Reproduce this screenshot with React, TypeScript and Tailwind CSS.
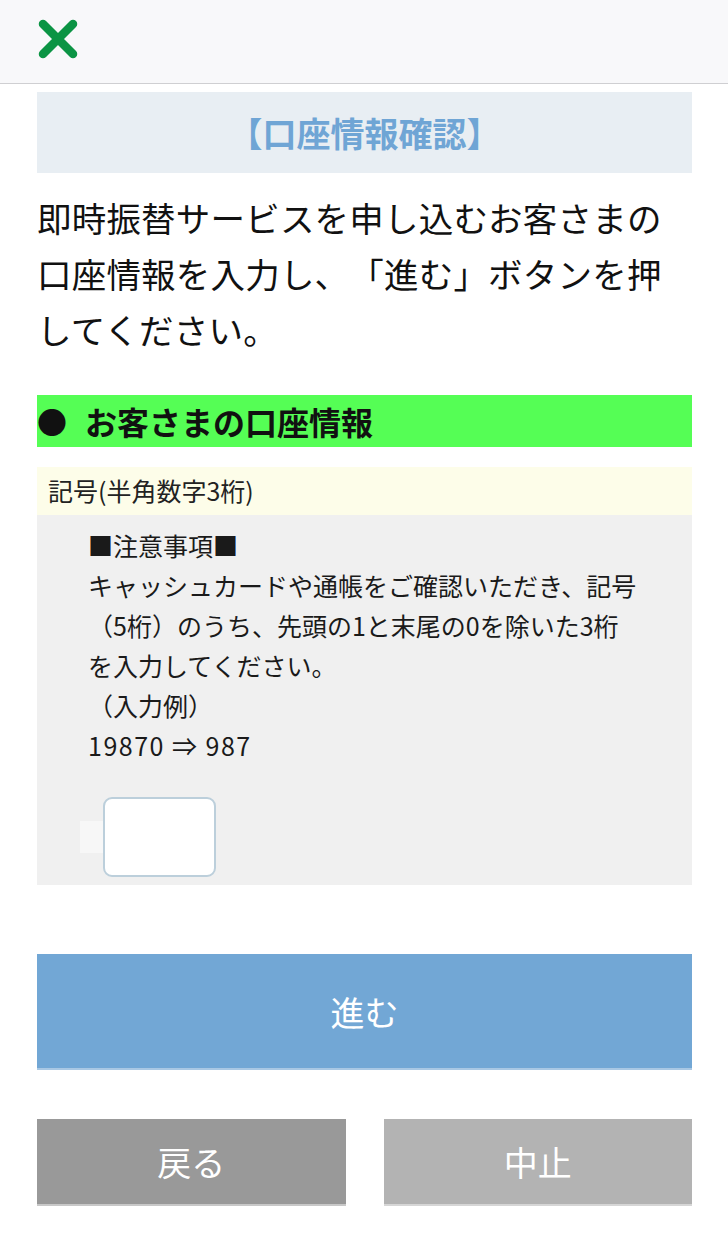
export default function App() {
  const jp = { fontFamily: '"Noto Sans CJK JP", "Noto Sans", sans-serif' };

  return (
    <div className="min-h-[1254px] bg-white text-[#111] [text-spacing-trim:space-all]" style={jp}>
      {/* top bar */}
      <header className="h-[84px] bg-[#f8f8fa] border-b border-[#cfcfd2] flex items-center pl-[38px]">
        <svg width="40" height="40" viewBox="0 0 40 40" className="-mt-[6px]">
          <path d="M5 5 L35 35 M35 5 L5 35" stroke="#0b9444" strokeWidth="8.5" strokeLinecap="round" />
        </svg>
      </header>

      <main className="pl-[37px] pr-[36px]">
        <div className="mt-[8px] h-[81px] bg-[#e8eef3] flex items-center justify-center">
          <h1 className="text-[34px] font-bold text-[#6fa5d5] leading-none">【口座情報確認】</h1>
        </div>

        <p className="mt-[16px] text-[34.5px] leading-[56px] tracking-[0.2px]">
          即時振替サービスを申し込むお客さまの口座情報を入力し、「進む」ボタンを押してください。
        </p>

        <h2 className="mt-[38px] h-[52px] bg-[#55fe55] flex items-center text-[32px] font-bold leading-none">
          <span className="w-[48px] text-[30px]">●</span>
          お客さまの口座情報
        </h2>

        <div className="mt-[20px] h-[48px] bg-[#fdfde9] flex items-center pl-[11px] text-[25px] text-[#222]">
          記号(半角数字3桁)
        </div>

        <div className="bg-[#f0f0f0] pt-[10px] pb-[8px] pl-[51px] pr-[40px] text-[25px] leading-[40px] text-[#1a1a1a]">
          <p>■注意事項■</p>
          <p>
            キャッシュカードや通帳をご確認いただき、記号
            <br />
            （5桁）のうち、先頭の1と末尾の0を除いた3桁
            <br />
            を入力してください。
          </p>
          <p>（入力例）</p>
          <p className="tracking-[1.5px]">19870 ⇒ 987</p>
          <div className="mt-[32px] flex items-center">
            <div className="w-[23px] h-[32px] bg-[#f7f7f7] -ml-[8px]" />
            <input
              type="text"
              className="w-[113px] h-[80px] bg-white border-2 border-[#bccfdb] rounded-[9px] outline-none"
            />
          </div>
        </div>

        <button className="mt-[69px] w-full h-[116px] bg-[#72a7d5] border-b-2 border-[#a9c8e4] text-white text-[34px] flex items-center justify-center">
          進む
        </button>

        <div className="mt-[49px] grid grid-cols-2 gap-[38px]">
          <button className="h-[87px] bg-[#999999] border-b-2 border-[#c8c8c8] text-white text-[34px] flex items-center justify-center">
            戻る
          </button>
          <button className="h-[87px] bg-[#b3b3b3] border-b-2 border-[#d6d6d6] text-white text-[34px] flex items-center justify-center">
            中止
          </button>
        </div>
      </main>
    </div>
  );
}
